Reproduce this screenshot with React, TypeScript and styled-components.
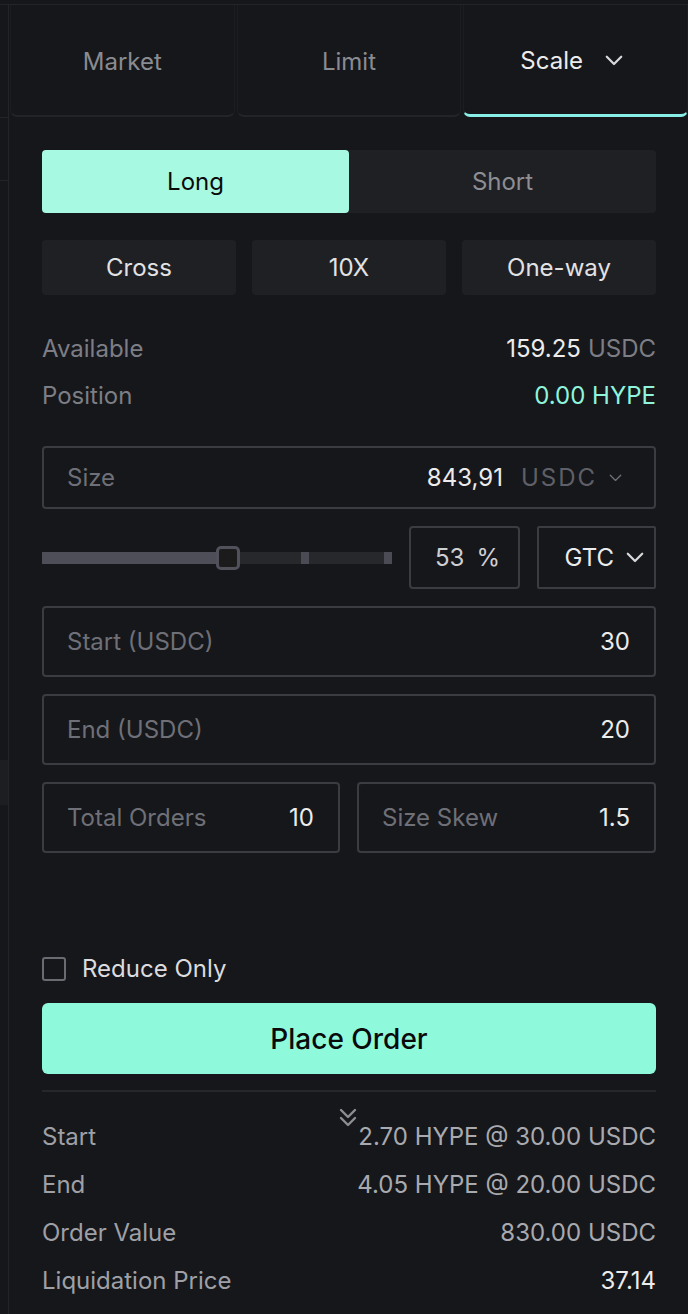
import * as React from 'react';
import styled, { createGlobalStyle } from 'styled-components';

const colors = {
  bg: '#16171b',
  line: '#232428',
  field: '#1f2024',
  border: '#3b3c42',
  label: '#7d7e85',
  text: '#ececec',
  teal: '#8ef5dc',
  long: '#a8f9e2',
  cta: '#8ffadb',
};

const GlobalStyle = createGlobalStyle`
  html, body {
    margin: 0;
    padding: 0;
    background: ${colors.bg};
  }
  body {
    font-family: Inter, "Noto Sans", "Liberation Sans", sans-serif;
    color: ${colors.text};
    -webkit-font-smoothing: antialiased;
  }
  * { box-sizing: border-box; }
`;

const Page = styled.div`
  width: 688px;
  height: 1314px;
  padding-top: 4px;
  background: ${colors.bg};
  overflow: hidden;
`;

const Frame = styled.div`
  display: flex;
  height: 100%;
  border-top: 1px solid ${colors.line};
`;

const Rail = styled.div`
  width: 9px;
  flex: 0 0 9px;
  border-right: 1px solid ${colors.line};
  display: flex;
  flex-direction: column;
`;

const RailGap = styled.div<{ $h: number }>`
  height: ${(p) => p.$h}px;
  flex: 0 0 auto;
`;

const RailLine = styled.div`
  height: 1px;
  background: ${colors.line};
`;

const RailBlock = styled.div`
  height: 45px;
  background: #1d1e22;
`;

const Panel = styled.div`
  flex: 1;
  display: flex;
  flex-direction: column;
`;

const Tabs = styled.div`
  display: grid;
  grid-template-columns: repeat(3, 1fr);
  gap: 2px;
  padding-left: 1px;
  height: 112px;
`;

const Tab = styled.div<{ $active?: boolean }>`
  display: flex;
  align-items: center;
  justify-content: center;
  padding-top: 2px;
  font-size: 24px;
  color: ${(p) => (p.$active ? colors.text : '#8a8b91')};
  border: 1px solid #1c1d21;
  border-top: none;
  border-bottom: ${(p) => (p.$active ? '3px solid #88eee6' : `2px solid ${colors.line}`)};
  border-radius: 0 0 7px 7px;
`;

const TabLabel = styled.span<{ $withMenu?: boolean }>`
  display: flex;
  align-items: center;
  gap: 22px;
  margin-right: ${(p) => (p.$withMenu ? 8 : 0)}px;
`;

const Content = styled.div`
  padding: 33px 32px 0 33px;
  display: flex;
  flex-direction: column;
`;

const SideToggle = styled.div`
  display: flex;
  height: 63px;
  background: ${colors.field};
  border-radius: 4px;
`;

const SideButton = styled.div<{ $active?: boolean }>`
  flex: 1;
  display: flex;
  align-items: center;
  justify-content: center;
  font-size: 24px;
  font-weight: 400;
  border-radius: 4px;
  background: ${(p) => (p.$active ? colors.long : 'transparent')};
  color: ${(p) => (p.$active ? '#0b0b0b' : '#8d8e94')};
`;

const ModeRow = styled.div`
  display: grid;
  grid-template-columns: repeat(3, 1fr);
  gap: 16px;
  margin-top: 27px;
`;

const ModeButton = styled.div`
  height: 55px;
  display: flex;
  align-items: center;
  justify-content: center;
  background: ${colors.field};
  border-radius: 4px;
  font-size: 24px;
  font-weight: 400;
  color: #e2e2e4;
`;

const InfoList = styled.div`
  margin-top: 30px;
  display: flex;
  flex-direction: column;
`;

const InfoRow = styled.div`
  display: flex;
  justify-content: space-between;
  align-items: center;
  height: 47px;
  font-size: 24px;
`;

const Label = styled.span`
  color: ${colors.label};
`;

const Value = styled.span<{ $tone?: 'teal' | 'muted' | 'white' }>`
  color: ${(p) =>
    p.$tone === 'teal' ? colors.teal : p.$tone === 'muted' ? '#a9aaaf' : colors.text};
`;

const Unit = styled.span`
  color: ${colors.label};
  margin-left: 7px;
`;

const Field = styled.div<{ $h?: number }>`
  height: ${(p) => p.$h ?? 71}px;
  border: 2px solid ${colors.border};
  border-radius: 4px;
  display: flex;
  align-items: center;
  padding: 0 24px 0 23px;
  font-size: 24px;
  gap: 10px;
`;

const Placeholder = styled.span`
  color: #6f7077;
  flex: 1;
`;

const FieldValue = styled.span`
  color: ${colors.text};
`;

const SizeField = styled(Field)`
  margin-top: 27px;
  padding-right: 32px;
`;

const SizeUnit = styled.span`
  color: #5f6067;
  letter-spacing: 2px;
  margin-left: 8px;
  display: flex;
  align-items: center;
  gap: 12px;
`;

const SliderRow = styled.div`
  display: flex;
  align-items: center;
  gap: 17px;
  margin-top: 17px;
  height: 63px;
`;

const Slider = styled.div`
  position: relative;
  width: 350px;
  height: 12px;
  background: #27282b;
`;

const SliderFill = styled.div`
  position: absolute;
  left: 0;
  top: 0;
  bottom: 0;
  background: #4d4e57;
`;

const Tick = styled.div<{ $left: number }>`
  position: absolute;
  top: 0;
  bottom: 0;
  width: 8px;
  left: ${(p) => p.$left}px;
  background: #4a4b55;
`;

const Thumb = styled.div`
  position: absolute;
  top: -6px;
  width: 24px;
  height: 24px;
  border: 3px solid #50515a;
  border-radius: 5px;
  background: #1b1b1c;
`;

const PercentBox = styled.div`
  width: 111px;
  height: 63px;
  border: 2px solid ${colors.border};
  border-radius: 4px;
  display: flex;
  align-items: center;
  justify-content: center;
  gap: 12px;
  font-size: 24px;
  color: #cfcfd2;
  padding-left: 6px;
`;

const TifBox = styled.div`
  flex: 1;
  height: 63px;
  border: 2px solid ${colors.border};
  border-radius: 2px;
  display: flex;
  align-items: center;
  justify-content: flex-end;
  gap: 12px;
  padding-right: 10px;
  font-size: 24px;
  color: ${colors.text};
`;

const FieldStack = styled.div`
  display: flex;
  flex-direction: column;
  gap: 17px;
  margin-top: 17px;
`;

const HalfRow = styled.div`
  display: grid;
  grid-template-columns: 298px 1fr;
  gap: 17px;
`;

const CheckRow = styled.label`
  display: flex;
  align-items: center;
  gap: 16px;
  margin-top: 101px;
  font-size: 24px;
  color: #dcdcde;
`;

const CheckBox = styled.span`
  width: 24px;
  height: 24px;
  border: 2px solid #6a6b72;
  border-radius: 3px;
`;

const PlaceButton = styled.button`
  margin-top: 20px;
  height: 71px;
  border: none;
  border-radius: 6px;
  background: ${colors.cta};
  color: #0a0a0a;
  font-family: inherit;
  font-size: 28px;
  font-weight: 500;
`;

const Divider = styled.div`
  height: 2px;
  background: #26272b;
  margin-top: 16px;
`;

const Summary = styled.div`
  position: relative;
  display: flex;
  flex-direction: column;
  padding-top: 20px;
`;

const SummaryRow = styled.div`
  display: flex;
  justify-content: space-between;
  align-items: center;
  height: 48px;
  font-size: 24px;
`;

const SummaryLabel = styled.span`
  color: #9fa0a6;
`;

const Collapse = styled.div`
  position: absolute;
  top: 15px;
  left: 296px;
  display: flex;
`;

const Chevron = ({ size = 16, color = '#cfcfd2', width = 2 }: { size?: number; color?: string; width?: number }) => (
  <svg width={size} height={size * 0.6} viewBox="0 0 20 12" fill="none">
    <path d="M2 2l8 8 8-8" stroke={color} strokeWidth={width * 1.25} strokeLinecap="round" strokeLinejoin="round" />
  </svg>
);

const DoubleChevron = () => (
  <svg width="20" height="22" viewBox="0 0 20 22" fill="none">
    <path d="M3 3l7 7 7-7M3 11l7 7 7-7" stroke="#8d8e94" strokeWidth="2.4" strokeLinecap="round" strokeLinejoin="round" />
  </svg>
);

const pct = 53;

export default function App() {
  return (
    <Page>
      <GlobalStyle />
      <Frame>
        <Rail>
          <RailGap $h={112} />
          <RailLine />
          <RailGap $h={62} />
          <RailLine />
          <RailGap $h={579} />
          <RailBlock />
        </Rail>
        <Panel>
          <Tabs>
            <Tab>Market</Tab>
            <Tab>Limit</Tab>
            <Tab $active>
              <TabLabel $withMenu>
                Scale
                <Chevron size={18} color="#d8d8da" />
              </TabLabel>
            </Tab>
          </Tabs>
          <Content>
            <SideToggle>
              <SideButton $active>Long</SideButton>
              <SideButton>Short</SideButton>
            </SideToggle>
            <ModeRow>
              <ModeButton>Cross</ModeButton>
              <ModeButton>10X</ModeButton>
              <ModeButton>One-way</ModeButton>
            </ModeRow>
            <InfoList>
              <InfoRow>
                <Label>Available</Label>
                <span>
                  <Value>159.25</Value>
                  <Unit>USDC</Unit>
                </span>
              </InfoRow>
              <InfoRow>
                <Label>Position</Label>
                <Value $tone="teal">0.00 HYPE</Value>
              </InfoRow>
            </InfoList>
            <SizeField $h={63}>
              <Placeholder>Size</Placeholder>
              <FieldValue>843,91</FieldValue>
              <SizeUnit>
                USDC
                <Chevron size={13} color="#6f7077" width={1.6} />
              </SizeUnit>
            </SizeField>
            <SliderRow>
              <Slider>
                <SliderFill style={{ width: `${(pct / 100) * 350}px` }} />
                <Tick $left={259} />
                <Tick $left={342} />
                <Thumb style={{ left: `${(pct / 100) * 350 - 12}px` }} />
              </Slider>
              <PercentBox>
                <span>{pct}</span>
                <span>%</span>
              </PercentBox>
              <TifBox>
                GTC
                <Chevron size={18} color="#d8d8da" />
              </TifBox>
            </SliderRow>
            <FieldStack>
              <Field>
                <Placeholder>Start (USDC)</Placeholder>
                <FieldValue>30</FieldValue>
              </Field>
              <Field>
                <Placeholder>End (USDC)</Placeholder>
                <FieldValue>20</FieldValue>
              </Field>
              <HalfRow>
                <Field>
                  <Placeholder>Total Orders</Placeholder>
                  <FieldValue>10</FieldValue>
                </Field>
                <Field>
                  <Placeholder>Size Skew</Placeholder>
                  <FieldValue>1.5</FieldValue>
                </Field>
              </HalfRow>
            </FieldStack>
            <CheckRow>
              <CheckBox />
              Reduce Only
            </CheckRow>
            <PlaceButton>Place Order</PlaceButton>
            <Divider />
            <Summary>
              <Collapse>
                <DoubleChevron />
              </Collapse>
              <SummaryRow>
                <SummaryLabel>Start</SummaryLabel>
                <Value $tone="muted">2.70 HYPE @ 30.00 USDC</Value>
              </SummaryRow>
              <SummaryRow>
                <SummaryLabel>End</SummaryLabel>
                <Value $tone="muted">4.05 HYPE @ 20.00 USDC</Value>
              </SummaryRow>
              <SummaryRow>
                <SummaryLabel>Order Value</SummaryLabel>
                <Value $tone="muted">830.00 USDC</Value>
              </SummaryRow>
              <SummaryRow>
                <SummaryLabel>Liquidation Price</SummaryLabel>
                <Value>37.14</Value>
              </SummaryRow>
            </Summary>
          </Content>
        </Panel>
      </Frame>
    </Page>
  );
}
